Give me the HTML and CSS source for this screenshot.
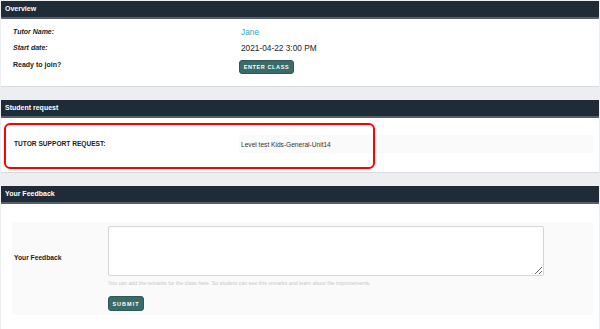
FILE: index.html
```html
<!DOCTYPE html>
<html lang="en">

<head>
    <meta charset="UTF-8">
    <meta name="viewport" content="width=device-width, initial-scale=1.0">
    <title>Class Details</title>
    <link rel="stylesheet" href="styles.css">
</head>

<body>
    <!-- Overview panel -->
    <div class="panel">
        <div class="panel-heading">Overview</div>
        <div class="panel-body overview">
            <div class="row">
                <div class="label italic">Tutor Name:</div>
                <div class="value tutor">Jane</div>
            </div>
            <div class="row">
                <div class="label italic">Start date:</div>
                <div class="value">2021-04-22 3:00 PM</div>
            </div>
            <div class="row join">
                <div class="label">Ready to join?</div>
                <div class="value"><button class="btn">ENTER CLASS</button></div>
            </div>
        </div>
    </div>

    <!-- Student request panel -->
    <div class="panel">
        <div class="panel-heading">Student request</div>
        <div class="panel-body request">
            <div class="request-row">
                <div class="label">TUTOR SUPPORT REQUEST:</div>
                <div class="request-value">Level test Kids-General-Unit14</div>
            </div>
            <div class="highlight"></div>
        </div>
    </div>

    <!-- Feedback panel -->
    <div class="panel">
        <div class="panel-heading">Your Feedback</div>
        <div class="panel-body feedback">
            <div class="feedback-row">
                <div class="label">Your Feedback</div>
                <div class="feedback-field">
                    <textarea class="textarea"></textarea>
                    <div class="hint">You can add the remarks for the class here. So student can see this remarks and learn about the improvements.</div>
                    <button class="btn submit">SUBMIT</button>
                </div>
            </div>
        </div>
    </div>
</body>

</html>
```

FILE: styles.css
```css
body {
    font-family: "Liberation Sans", Arial, sans-serif;
    margin: 0;
    padding: 1px 1px 0 1px;
    background-color: #eceef1;
    color: #222;
}

* {
    box-sizing: border-box;
}

.panel {
    background-color: #fff;
    border-bottom: 1px solid #d9dbde;
    margin-bottom: 13px;
}

.panel-heading {
    background-color: #1f2b36;
    color: #fff;
    font-size: 7px;
    font-weight: bold;
    height: 18px;
    line-height: 16px;
    padding-left: 4px;
    border-bottom: 2px solid #56606a;
}

.overview {
    padding: 5px 0 12px 12px;
}

.row {
    display: flex;
    align-items: center;
    height: 16px;
}

.row.join {
    align-items: flex-start;
    height: auto;
    padding-top: 2px;
}

.row.join .label {
    margin-top: 3px;
}

.label {
    width: 228px;
    font-size: 7px;
    font-weight: bold;
    line-height: 8px;
}

.italic {
    font-style: italic;
}

.value {
    font-size: 8.3px;
    color: #222;
}

.tutor {
    color: #2aa6c8;
}

.btn {
    font-family: "Liberation Sans", Arial, sans-serif;
    background-color: #3a6b69;
    color: #fff;
    border: 1px solid #2f5856;
    border-radius: 3px;
    font-size: 5.5px;
    font-weight: bold;
    letter-spacing: 0.6px;
    height: 14px;
    width: 55px;
    padding: 0;
    margin: 2px 0 0 -2px;
}

.request {
    position: relative;
    padding: 17px 6px 19px 6px;
}

.request-row {
    display: flex;
    align-items: center;
    height: 18px;
}

.request-row .label {
    width: 232px;
    padding-left: 7px;
    font-size: 6.6px;
}

.request-value {
    flex: 1;
    height: 100%;
    display: flex;
    align-items: center;
    background-color: #fafafa;
    font-size: 6.6px;
    color: #333;
    padding-left: 2px;
}

/* Red annotation drawn over the row */
.highlight {
    position: absolute;
    left: 3px;
    top: 5px;
    width: 371px;
    height: 46px;
    border: 2px solid #f00;
    border-radius: 6px;
}

.feedback {
    padding: 18px 6px 14px 11px;
}

.feedback-row {
    display: flex;
    align-items: flex-start;
    background-color: #fafafa;
    padding: 4px 0;
}

.feedback-row .label {
    width: 96px;
    padding-left: 2px;
    margin-top: 28px;
    font-size: 6.7px;
}

.feedback-field {
    display: flex;
    flex-direction: column;
    align-items: flex-start;
}

.textarea {
    width: 436px;
    height: 50px;
    border: 1px solid #d6d6d6;
    border-radius: 2px;
    margin: 0;
    padding: 0;
    background-color: #fff;
}

.hint {
    font-size: 5.3px;
    color: #c8c8c8;
    margin-top: 4px;
}

.btn.submit {
    height: 15px;
    width: 36px;
    letter-spacing: 1px;
    margin: 10px 0 0 0;
}
```
